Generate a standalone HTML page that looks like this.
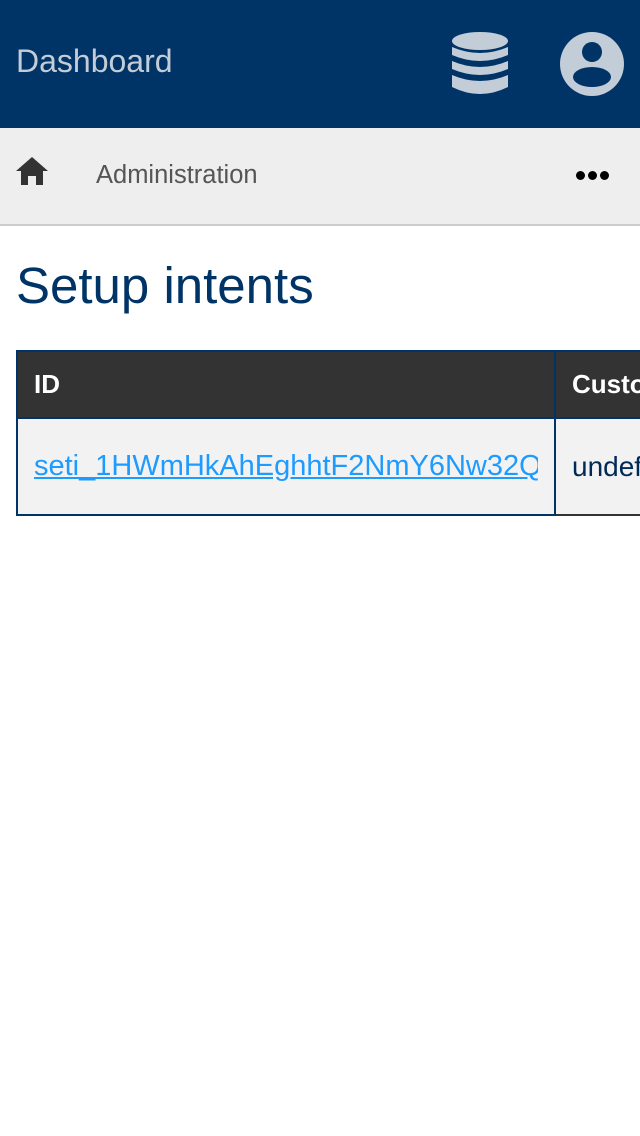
<!DOCTYPE html>
<html><head><meta charset="utf-8"><style>
*{margin:0;padding:0;box-sizing:border-box}
html,body{width:640px;height:1136px;overflow:hidden}
body{background:#fff;font-family:"Liberation Sans",sans-serif;position:relative}
.top{position:absolute;left:0;top:0;width:640px;height:128px;background:#003366}
.top .t{position:absolute;left:16px;top:43px;font-size:32px;color:#c3cdd8}
.bar{position:absolute;left:0;top:128px;width:640px;height:98px;background:#eeeeee;border-bottom:2px solid #cccccc}
h1{position:absolute;left:16px;top:256px;font-size:51px;font-weight:normal;color:#003366}
.wrap{position:absolute;left:0;top:350px;width:640px;height:170px;overflow:hidden}
table{position:absolute;left:16px;top:0;border-collapse:collapse;table-layout:fixed;width:800px}
th{background:#333;color:#fff;font-size:26px;text-align:left;padding:0 16px;height:67px;border:2px solid #003366}
td{background:#f2f2f2;font-size:26px;height:97px;padding:0 16px;border:2px solid #003366;white-space:nowrap;overflow:hidden}
td .c{display:block;width:504px;overflow:hidden;white-space:nowrap;padding-bottom:4px;margin-top:4px}
td a{color:#1e9bff;text-decoration:underline;font-size:29px}
td.u{color:#002a55;border-bottom-color:#333;font-size:28px}
</style></head><body>
<div class="top"><div class="t">Dashboard</div>
<svg style="position:absolute;left:451px;top:31px" width="58" height="66" viewBox="0 0 58 66" fill="#c3cdd8">
<ellipse cx="29" cy="10" rx="28" ry="9"/>
<path d="M1 16 Q29 28 57 16 V24 Q29 36 1 24Z"/>
<path d="M1 30 Q29 42 57 30 V38 Q29 50 1 38Z"/>
<path d="M1 44 Q29 56 57 44 V56 Q29 70 1 56Z"/>
</svg>
<svg style="position:absolute;left:560px;top:32px" width="64" height="64" viewBox="0 0 64 64">
<circle cx="32" cy="32" r="32" fill="#c3cdd8"/>
<circle cx="32" cy="20" r="10" fill="#003366"/>
<ellipse cx="32" cy="45" rx="19" ry="10" fill="#003366"/>
</svg></div>
<div class="bar">
<svg style="position:absolute;left:16px;top:29px" width="32" height="28" viewBox="0 0 32 28" fill="#333"><path d="M16 0 L32 14 H27 V28 H20 V19 H12 V28 H5 V14 H0Z"/></svg>
<div style="position:absolute;left:96px;top:33px;font-size:25.5px;color:#555">Administration</div>
<div style="position:absolute;left:576px;top:43px;width:34px;height:10px">
<span style="position:absolute;left:0;top:0;width:9px;height:9px;border-radius:50%;background:#000"></span>
<span style="position:absolute;left:12px;top:0;width:9px;height:9px;border-radius:50%;background:#000"></span>
<span style="position:absolute;left:24px;top:0;width:9px;height:9px;border-radius:50%;background:#000"></span>
</div></div>
<h1>Setup intents</h1>
<div class="wrap">
<table><colgroup><col style="width:538px"><col style="width:262px"></colgroup>
<tr><th>ID</th><th>Customer</th></tr>
<tr><td><span class="c"><a>seti_1HWmHkAhEghhtF2NmY6Nw32Qxyz</a></span></td><td class="u">undefined</td></tr>
</table></div>
</body></html>
